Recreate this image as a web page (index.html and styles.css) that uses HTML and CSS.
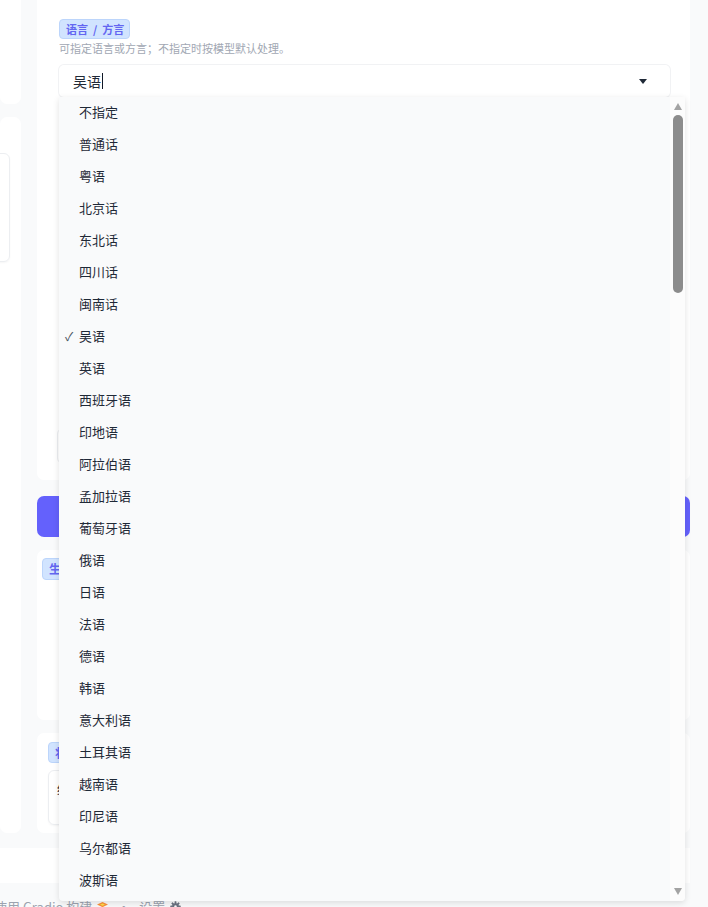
FILE: index.html
```html
<!DOCTYPE html>
<html lang="zh-CN">
<head>
<meta charset="utf-8">
<title>语言 / 方言</title>
<link rel="stylesheet" href="styles.css">
</head>
<body>
<div class="page">
  <div class="cols">
    <div class="col-left">
      <div class="card card-a"></div>
      <div class="card card-b"><div class="inner-box"></div></div>
    </div>
    <div class="col-right">
      <div class="card main-card">
        <span class="badge badge-sm">语言&nbsp;&nbsp;/&nbsp;&nbsp;方言</span>
        <p class="hint">可指定语言或方言；不指定时按模型默认处理。</p>
        <div class="select">
          <span class="select-value">吴语</span><span class="caret"></span>
          <span class="arrow"></span>
          <div class="dropdown">
            <ul class="options">
              <li><span class="check"></span>不指定</li>
              <li><span class="check"></span>普通话</li>
              <li><span class="check"></span>粤语</li>
              <li><span class="check"></span>北京话</li>
              <li><span class="check"></span>东北话</li>
              <li><span class="check"></span>四川话</li>
              <li><span class="check"></span>闽南话</li>
              <li><span class="check">✓</span>吴语</li>
              <li><span class="check"></span>英语</li>
              <li><span class="check"></span>西班牙语</li>
              <li><span class="check"></span>印地语</li>
              <li><span class="check"></span>阿拉伯语</li>
              <li><span class="check"></span>孟加拉语</li>
              <li><span class="check"></span>葡萄牙语</li>
              <li><span class="check"></span>俄语</li>
              <li><span class="check"></span>日语</li>
              <li><span class="check"></span>法语</li>
              <li><span class="check"></span>德语</li>
              <li><span class="check"></span>韩语</li>
              <li><span class="check"></span>意大利语</li>
              <li><span class="check"></span>土耳其语</li>
              <li><span class="check"></span>越南语</li>
              <li><span class="check"></span>印尼语</li>
              <li><span class="check"></span>乌尔都语</li>
              <li><span class="check"></span>波斯语</li>
              <li><span class="check"></span>泰语</li>
              <li><span class="check"></span>波兰语</li>
            </ul>
            <div class="scrollbar">
              <span class="sb-up"></span>
              <span class="sb-thumb"></span>
              <span class="sb-down"></span>
            </div>
          </div>
        </div>
        <div class="hidden-box"></div>
      </div>
      <button class="primary">开始生成</button>
      <div class="card card-2"><span class="badge">生成结果</span></div>
      <div class="card card-3">
        <span class="badge">状态</span>
        <div class="textbox">结果将显示在这里</div>
      </div>
    </div>
  </div>
  <div class="strip"></div>
  <footer class="footer">
    <span>使用 Gradio 构建</span>
    <svg class="logo" width="11" height="9" viewBox="0 0 11 9"><path d="M5.5 0 L11 2.6 L5.5 5.2 L0 2.6 Z" fill="#fb923c"/><path d="M0 5 L5.5 7.6 L11 5 L11 6.4 L5.5 9 L0 6.4 Z" fill="#f97316"/><path d="M3 2.6 L5.5 1.4 L8 2.6 L5.5 3.8 Z" fill="#fde047"/></svg>
    <span class="dot">·</span>
    <span>设置</span>
    <svg class="gear" width="11" height="11" viewBox="0 0 12 12"><g fill="#6b7280"><circle cx="6" cy="6" r="3.6"/><rect x="5" y="0.3" width="2" height="11.4" rx="0.5"/><rect x="5" y="0.3" width="2" height="11.4" rx="0.5" transform="rotate(45 6 6)"/><rect x="5" y="0.3" width="2" height="11.4" rx="0.5" transform="rotate(90 6 6)"/><rect x="5" y="0.3" width="2" height="11.4" rx="0.5" transform="rotate(135 6 6)"/></g><circle cx="6" cy="6" r="1.4" fill="#f9fafb"/></svg>
  </footer>
</div>
</body>
</html>
```

FILE: styles.css
```css
* { box-sizing: border-box; }

html, body {
  margin: 0;
  padding: 0;
  height: 100%;
  overflow: hidden;
  background: #f9fafb;
  font-family: "Noto Sans CJK SC", "Noto Sans", sans-serif;
  color: #1f2937;
}

.page {
  margin-top: -20px;
}

.cols {
  display: flex;
  gap: 16px;
  width: 690px;
}

.col-left {
  width: 21px;
  display: flex;
  flex-direction: column;
  gap: 13px;
}

.col-right {
  width: 653px;
  display: flex;
  flex-direction: column;
}

.card {
  background: #ffffff;
  border-radius: 7px;
}

.card-a { height: 124px; }

.card-b {
  height: 716px;
  padding: 36px 11px 0 0;
}

.inner-box {
  margin-left: -10px;
  height: 109px;
  border: 1px solid #eceef1;
  border-radius: 6px;
  box-shadow: 0 1px 2px rgba(0, 0, 0, 0.04);
}

.main-card {
  height: 500px;
  padding: 39px 20px 0 22px;
  display: flex;
  flex-direction: column;
  align-items: flex-start;
}

.badge {
  display: inline-flex;
  align-items: center;
  height: 22px;
  padding: 0 6px;
  background: #d1e4ff;
  border: 1px solid #bcd5fb;
  border-radius: 4px;
  color: #6366f1;
  font-size: 12px;
  font-weight: 700;
  white-space: nowrap;
}

.badge-sm {
  height: 20px;
  font-size: 11px;
  padding: 0 5px 0 6px;
}

.hint {
  margin: 2px 0 0;
  line-height: 14px;
  font-size: 11px;
  color: #a1a7b3;
}

.select {
  position: relative;
  margin-top: 10px;
  width: 611px;
  height: 32px;
  background: #ffffff;
  border-radius: 5px;
  box-shadow: 0 0 0 1px #f1f2f4, 0 1px 2px rgba(0, 0, 0, 0.04);
  display: flex;
  align-items: center;
  padding: 0 23px 0 14px;
}

.select-value {
  font-size: 14px;
  color: #1f2937;
}

.caret {
  width: 1px;
  height: 16px;
  background: #111827;
  margin-left: 1px;
}

.arrow {
  margin-left: auto;
  width: 0;
  height: 0;
  border-left: 4px solid transparent;
  border-right: 4px solid transparent;
  border-top: 5px solid #1f2937;
}

.dropdown {
  position: absolute;
  top: 32px;
  left: 0;
  width: 626px;
  height: 804px;
  background: #f9fafb;
  box-shadow: 0 2px 6px rgba(0, 0, 0, 0.12);
  border-radius: 0 0 4px 4px;
  display: flex;
  overflow: hidden;
  z-index: 10;
}

.options {
  flex: 1;
  margin: 0;
  padding: 0;
  list-style: none;
  overflow: hidden;
}

.options li {
  display: flex;
  align-items: center;
  height: 32px;
  padding: 0 0 4px 6px;
  font-size: 13px;
  color: #1f2937;
}

.check {
  width: 14px;
  font-size: 12px;
  color: #4b5563;
}

.scrollbar {
  width: 15px;
  background: #fcfcfc;
  display: flex;
  flex-direction: column;
  align-items: center;
  padding: 6px 0;
}

.sb-up {
  width: 0;
  height: 0;
  border-left: 4.5px solid transparent;
  border-right: 4.5px solid transparent;
  border-bottom: 7px solid #a3a3a3;
}

.sb-thumb {
  margin-top: 5px;
  width: 10px;
  height: 178px;
  border-radius: 5px;
  background: #8c8c8c;
}

.sb-down {
  margin-top: auto;
  width: 0;
  height: 0;
  border-left: 4.5px solid transparent;
  border-right: 4.5px solid transparent;
  border-top: 7px solid #a3a3a3;
}

.hidden-box {
  margin-top: 331px;
  margin-left: -2px;
  width: 615px;
  height: 36px;
  border: 1px solid #eceef1;
  border-radius: 6px;
}

.primary {
  margin-top: 16px;
  height: 41px;
  border: none;
  border-radius: 7px;
  background: #6461fc;
  color: #ffffff;
  font-family: inherit;
  font-size: 14px;
  font-weight: 600;
}

.card-2 {
  margin-top: 13px;
  height: 170px;
  padding: 5px;
}

.card-3 {
  margin-top: 13px;
  height: 100px;
  padding: 9px 10px 0 11px;
  display: flex;
  flex-direction: column;
  align-items: flex-start;
}

.card-3 .badge { height: 21px; }

.textbox {
  margin-top: 7px;
  align-self: stretch;
  height: 55px;
  border: 1px solid #eceef1;
  border-radius: 6px;
  box-shadow: 0 1px 2px rgba(0, 0, 0, 0.04);
  padding: 8px 8px;
  font-size: 13px;
  color: #1f2937;
}

.strip {
  margin-top: 15px;
  width: 690px;
  height: 35px;
  background: #ffffff;
}

.footer {
  margin-top: 13px;
  margin-left: -6px;
  display: flex;
  align-items: center;
  gap: 5px;
  height: 20px;
  font-size: 13px;
  color: #9ca3af;
  white-space: nowrap;
}

.dot { padding: 0 4px; }
```
